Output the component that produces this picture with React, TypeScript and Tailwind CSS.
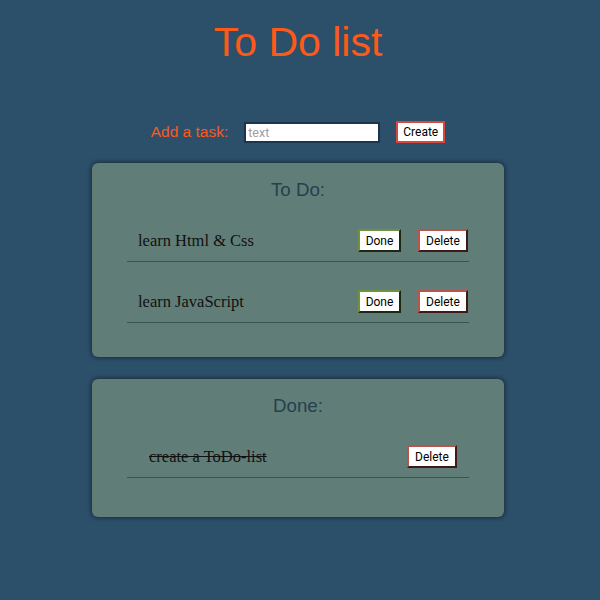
type Task = { id: number; text: string };

const todo: Task[] = [
  { id: 1, text: "learn Html & Css" },
  { id: 2, text: "learn JavaScript" },
];

const done: Task[] = [{ id: 3, text: "create a ToDo-list" }];

const btnBase =
  "h-[23px] bg-white text-[12px] text-black border-2 [font-family:Roboto,'Liberation_Sans',sans-serif] leading-none";

function DoneButton() {
  return (
    <button
      className={`${btnBase} w-[43px] border-t-[#6f9240] border-l-[#6f9240] border-b-[#1c2812] border-r-[#1c2812]`}
    >
      Done
    </button>
  );
}

function DeleteButton() {
  return (
    <button
      className={`${btnBase} w-[50px] border-t-[#b8544c] border-l-[#b8544c] border-b-[#3d1a17] border-r-[#3d1a17]`}
    >
      Delete
    </button>
  );
}

function Card({
  title,
  children,
  className = "",
}: {
  title: string;
  children: React.ReactNode;
  className?: string;
}) {
  return (
    <section
      className={`w-[412px] rounded-[6px] bg-[#617d77] pt-[16px] shadow-[0_0_4px_1px_rgba(0,0,0,0.45)] ${className}`}
    >
      <h3 className="text-center text-[18.72px] leading-[22px] text-[#24414f] [font-family:'Liberation_Sans',Arial,sans-serif]">
        {title}
      </h3>
      <ul className="mx-[35px] flex flex-col">{children}</ul>
    </section>
  );
}

export default function App() {
  return (
    <div className="min-h-screen w-full bg-[#2c4f6a] pr-[4px] pt-[19px] [font-family:'Liberation_Sans',Arial,sans-serif]">
      {/* header */}
      <h1 className="text-center text-[41px] leading-[47px] text-[#fb5a1a]">
        To Do list
      </h1>

      {/* add task */}
      <div className="mt-[55px] flex items-center justify-center gap-[16px]">
        <label className="text-[15.5px] leading-[20px] text-[#fb5a1a]">Add a task:</label>
        <input
          type="text"
          placeholder="text"
          className="h-[21px] w-[136px] border-2 border-[#1b3550] bg-white px-[2px] text-[12.5px] text-black placeholder:text-[#a0a0a0] outline-none [font-family:Roboto,'Liberation_Sans',sans-serif]"
        />
        <button className="h-[22px] w-[49px] border-2 border-[#d8473d] bg-white text-[12px] leading-none text-black [font-family:Roboto,'Liberation_Sans',sans-serif]">
          Create
        </button>
      </div>

      <div className="mt-[20px] flex flex-col items-center gap-[22px]">
        <Card title="To Do:" className="pb-[34px]">
          {todo.map((t) => (
            <li
              key={t.id}
              className="flex items-center border-b border-[#3a534f] pt-[28px] pb-[9px] pl-[11px] pr-[1px]"
            >
              <span className="flex-1 text-[16.5px] leading-[23px] text-[#111] [font-family:'Liberation_Serif','Times_New_Roman',serif]">
                {t.text}
              </span>
              <div className="flex gap-[17px]">
                <DoneButton />
                <DeleteButton />
              </div>
            </li>
          ))}
        </Card>

        <Card title="Done:" className="pb-[39px]">
          {done.map((t) => (
            <li
              key={t.id}
              className="flex items-center border-b border-[#3a534f] pt-[28px] pb-[9px] pl-[22px] pr-[12px]"
            >
              <span className="flex-1 text-[16.5px] leading-[23px] text-[#111] line-through [font-family:'Liberation_Serif','Times_New_Roman',serif]">
                {t.text}
              </span>
              <DeleteButton />
            </li>
          ))}
        </Card>
      </div>
    </div>
  );
}
